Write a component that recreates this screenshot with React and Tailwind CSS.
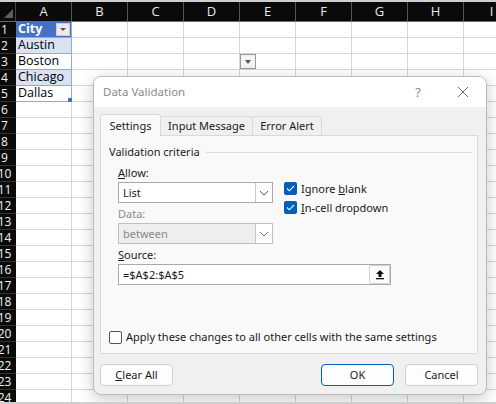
import React from 'react';

const COLS = ['A', 'B', 'C', 'D', 'E', 'F', 'G', 'H', 'I'];
const ROWS = Array.from({ length: 24 }, (_, i) => i + 1);
const TABLE = { 1: 'City', 2: 'Austin', 3: 'Boston', 4: 'Chicago', 5: 'Dallas' };

const Chevron = ({ color = '#555' }) => (
  <svg width="10" height="6" viewBox="0 0 10 6" fill="none">
    <path d="M1 1l4 4 4-4" stroke={color} strokeWidth="1" />
  </svg>
);

const Check = () => (
  <span className="w-[13px] h-[13px] rounded-[2px] bg-[#005fb8] flex items-center justify-center shrink-0">
    <svg width="9" height="7" viewBox="0 0 9 7" fill="none">
      <path d="M1 3.5l2.3 2.3L8 1" stroke="white" strokeWidth="1.1" />
    </svg>
  </span>
);

const Cell = ({ row, col }) => {
  const inTable = col === 0 && row <= 5;
  let cls = 'w-[56px] h-full border-r border-b border-[#d6d6d6] shrink-0 relative';
  if (inTable) {
    if (row === 1) cls = 'w-[56px] h-full shrink-0 relative bg-[#4472c4] border-r border-b border-[#8ea9db]';
    else if (row % 2 === 0) cls = 'w-[56px] h-full shrink-0 relative bg-[#d9e1f2] border-r border-b border-[#8ea9db]';
    else cls = 'w-[56px] h-full shrink-0 relative bg-white border-r border-b border-[#8ea9db]';
  }
  return (
    <div className={cls}>
      {inTable && (
        <span
          className={`absolute left-[2px] top-[-1px] text-[12.5px] leading-[16px] ${row === 1 ? 'text-white font-bold' : 'text-black'}`}
        >
          {TABLE[row]}
        </span>
      )}
      {inTable && row === 1 && (
        <span className="absolute right-[1px] top-[1px] w-[14px] h-[13px] bg-[#ebebeb] border border-[#d0d0d0] flex items-center justify-center">
          <span className="w-0 h-0 border-l-[3px] border-r-[3px] border-t-[3px] border-l-transparent border-r-transparent border-t-[#555]" />
        </span>
      )}
      {inTable && row === 5 && (
        <span className="absolute right-[-1px] bottom-[-1px] w-[4px] h-[4px] bg-[#4472c4]" />
      )}
      {col === 4 && row === 3 && (
        <span className="absolute left-0 top-0 w-[16px] h-[15px] bg-[#f3f3f3] border border-[#9a9a9a] flex items-center justify-center">
          <span className="w-0 h-0 border-l-[3.5px] border-r-[3.5px] border-t-[4px] border-l-transparent border-r-transparent border-t-[#555]" />
        </span>
      )}
    </div>
  );
};

const Sheet = () => (
  <div className="flex flex-col" style={{ fontFamily: '"Open Sans", "Noto Sans", sans-serif' }}>
    <div className="flex h-[20px] bg-[#0a0a0a] border-b border-[#6a6a6a] shrink-0">
      <div className="w-[16px] h-full relative border-r border-[#444] shrink-0 flex items-end justify-end pb-[3px] pr-[2px]">
        <svg width="9" height="9" viewBox="0 0 9 9">
          <path d="M9 0V9H0z" fill="#5c5c5c" />
        </svg>
      </div>
      {COLS.map((c) => (
        <div key={c} className="w-[56px] h-full shrink-0 border-r border-[#555] flex items-center justify-center text-[13px] text-[#e8e8e8]">
          {c}
        </div>
      ))}
    </div>
    {ROWS.map((r) => (
      <div key={r} className="flex h-[16px] shrink-0">
        <div className="w-[16px] h-full bg-[#0a0a0a] overflow-hidden flex items-center shrink-0 border-b border-[#333]">
          <div className="w-[9px] flex justify-center shrink-0">
            <span className="text-[12px] leading-[15px] text-[#f4f0e8] whitespace-nowrap">{r}</span>
          </div>
        </div>
        {COLS.map((c, i) => (
          <Cell key={c} row={r} col={i} />
        ))}
      </div>
    ))}
  </div>
);

const Tab = ({ active, w, children }) => (
  <div
    className={`${w} flex items-center justify-center border border-b-0 border-[#d9d9d9] rounded-t-[3px] text-[#1a1a1a] ${
      active ? 'h-[22px] bg-[#f9f9f9] relative z-10 -mb-px' : 'h-[19px] bg-[#f0f0f0] border-l-0'
    }`}
  >
    {children}
  </div>
);

const Button = ({ children, primary, className = '' }) => (
  <div
    className={`h-[22px] w-[73px] flex items-center justify-center bg-[#fdfdfd] rounded-[4px] border ${primary ? 'border-[#005fb8]' : 'border-[#d0d0d0]'} text-[#1a1a1a] ${className}`}
  >
    {children}
  </div>
);

const Combo = ({ value, disabled }) => (
  <div
    className={`w-[155px] h-[21px] border flex items-center ${
      disabled ? 'bg-[#eeeeee] border-[#c0c0c0] text-[#8a8a8a]' : 'bg-white border-[#a9a9a9]'
    }`}
  >
    <span className="pl-[4px] flex-1">{value}</span>
    <span className="w-[17px] h-[19px] bg-white border-l border-[#c8c8c8] flex items-center justify-center">
      <Chevron color={disabled ? '#777' : '#555'} />
    </span>
  </div>
);

const Dialog = () => (
  <div
    className="absolute left-[93px] top-[74px] w-[394px] h-[319px] rounded-[8px] border border-[#bcbcbc] bg-[#f0f0f0] shadow-[0_4px_16px_rgba(0,0,0,0.22)] overflow-hidden text-[11px] leading-[16px] text-[#1a1a1a]"
    style={{ fontFamily: '"Noto Sans", sans-serif' }}
  >
    <div className="h-[30px] bg-white flex items-center pl-[9px] pr-[17px]">
      <span className="text-[11.5px] text-[#8a8a8a]">Data Validation</span>
      <span className="ml-auto text-[13px] text-[#8a8a8a] mr-[36px]">?</span>
      <svg width="12" height="12" viewBox="0 0 12 12">
        <path d="M1 1l10 10M11 1L1 11" stroke="#6a6a6a" strokeWidth="1" />
      </svg>
    </div>
    <div className="px-[6px] pt-[7px]">
      <div className="flex h-[21px] items-end">
        <Tab active w="w-[61px]">Settings</Tab>
        <Tab w="w-[92px]">Input Message</Tab>
        <Tab w="w-[69px]">Error Alert</Tab>
      </div>
      <div className="h-[219px] bg-[#f9f9f9] border border-[#d9d9d9] mr-[2px] flex flex-col px-[8px] pt-[8px]">
        <div className="flex items-center gap-[6px]">
          <span>Validation criteria</span>
          <span className="flex-1 h-px bg-[#dcdcdc] mr-[-3px]" />
        </div>
        <div className="pl-[9px] mt-[5px]">
          <div className="flex">
            <div className="flex flex-col">
              <div><u>A</u>llow:</div>
              <div className="mt-[1px]">
                <Combo value="List" />
              </div>
              <div className="text-[#8a8a8a] mt-[3px]">Data:</div>
              <div className="mt-[1px]">
                <Combo value="between" disabled />
              </div>
            </div>
            <div className="flex flex-col gap-[6px] ml-[11px] pt-[17px]">
              <label className="flex items-center gap-[4px] leading-[13px]">
                <Check /> <span>Ignore <u>b</u>lank</span>
              </label>
              <label className="flex items-center gap-[4px] leading-[13px]">
                <Check /> <span><u>I</u>n-cell dropdown</span>
              </label>
            </div>
          </div>
          <div className="mt-[3px]"><u>S</u>ource:</div>
          <div className="w-[273px] h-[21px] mt-[1px] bg-white border border-[#a9a9a9] flex items-center">
            <span className="pl-[4px] flex-1">=$A$2:$A$5</span>
            <span className="w-[21px] h-[19px] bg-[#fbfbfb] border border-[#d0d0d0] rounded-[2px] flex items-center justify-center">
              <svg width="10" height="11" viewBox="0 0 10 11">
                <path d="M5 1L1 5h2.5v3h3V5H9z" fill="#111" />
                <rect x="1" y="9" width="8" height="1.3" fill="#111" />
              </svg>
            </span>
          </div>
        </div>
        <label className="flex items-center gap-[4px] mt-auto mb-[8px]">
          <span className="w-[13px] h-[13px] rounded-[2px] border border-[#555] bg-white shrink-0" />
          <span>Apply these changes to all other cells with the same settings</span>
        </label>
      </div>
      <div className="flex mt-[10px]">
        <Button>
          <span><u>C</u>lear All</span>
        </Button>
        <Button primary className="ml-auto">OK</Button>
        <Button className="ml-[11px] mr-[2px]">Cancel</Button>
      </div>
    </div>
  </div>
);

export default function App() {
  return (
    <div className="w-[496px] h-[404px] relative overflow-hidden bg-white border-t-2 border-b-2 border-[#cfcfcf]">
      <Sheet />
      <Dialog />
    </div>
  );
}
